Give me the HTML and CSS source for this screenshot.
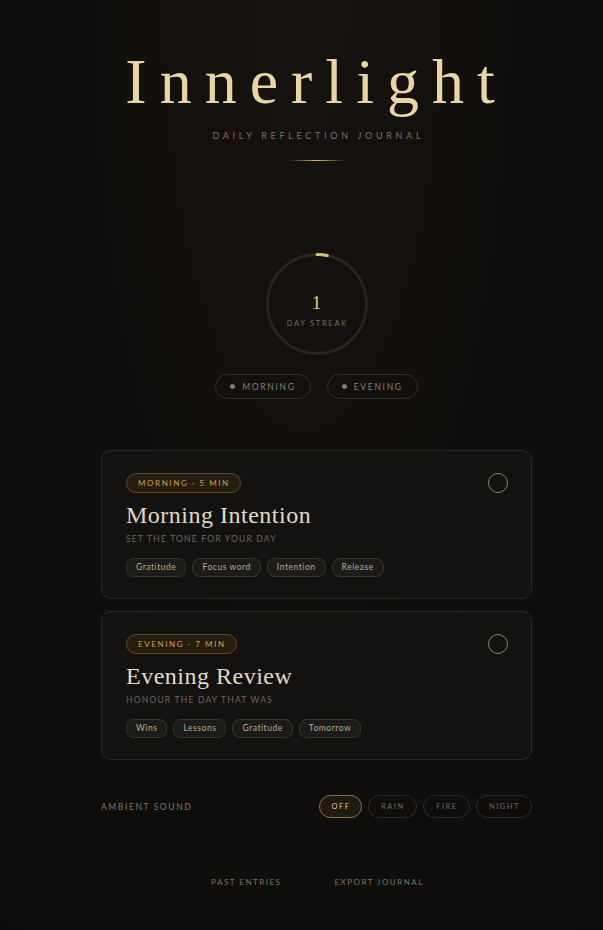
FILE: index.html
```html
<!DOCTYPE html>
<html lang="en">
<head>
    <meta charset="UTF-8">
    <meta name="viewport" content="width=device-width, initial-scale=1.0">
    <title>Innerlight</title>
    <link rel="stylesheet" href="styles.css">
</head>
<body>
    <div class="page">
        <header class="masthead">
            <h1 class="brand">Innerlight</h1>
            <p class="tagline">Daily Reflection Journal</p>
            <div class="rule"></div>
        </header>

        <section class="streak">
            <div class="ring">
                <svg width="102" height="102" viewBox="0 0 102 102">
                    <circle cx="51" cy="51" r="49.5" fill="none" stroke="#2a251d" stroke-width="3"/>
                    <circle cx="51" cy="51" r="49.5" fill="none" stroke="#d9bf7f" stroke-width="3"
                        stroke-dasharray="10.4 400" stroke-linecap="round" transform="rotate(-90 51 51)"/>
                </svg>
                <div class="ring-text">
                    <span class="streak-num">1</span>
                    <span class="streak-label">Day Streak</span>
                </div>
            </div>
            <div class="modes">
                <span class="mode"><i class="dot"></i>Morning</span>
                <span class="mode"><i class="dot"></i>Evening</span>
            </div>
        </section>

        <main class="rituals">
            <article class="card">
                <div class="card-head">
                    <span class="badge">Morning · 5 min</span>
                    <span class="check"></span>
                </div>
                <h2 class="card-title">Morning Intention</h2>
                <p class="card-sub">Set the tone for your day</p>
                <div class="tags">
                    <span class="tag">Gratitude</span>
                    <span class="tag">Focus word</span>
                    <span class="tag">Intention</span>
                    <span class="tag">Release</span>
                </div>
            </article>

            <article class="card">
                <div class="card-head">
                    <span class="badge">Evening · 7 min</span>
                    <span class="check"></span>
                </div>
                <h2 class="card-title">Evening Review</h2>
                <p class="card-sub">Honour the day that was</p>
                <div class="tags">
                    <span class="tag">Wins</span>
                    <span class="tag">Lessons</span>
                    <span class="tag">Gratitude</span>
                    <span class="tag">Tomorrow</span>
                </div>
            </article>
        </main>

        <section class="ambient">
            <span class="ambient-label">Ambient Sound</span>
            <div class="sounds">
                <button class="sound active">Off</button>
                <button class="sound">Rain</button>
                <button class="sound">Fire</button>
                <button class="sound">Night</button>
            </div>
        </section>

        <footer class="links">
            <a href="#">Past Entries</a>
            <a href="#">Export Journal</a>
        </footer>
    </div>
</body>
</html>
```

FILE: styles.css
```css
html, body {
    margin: 0;
    padding: 0;
}
body {
    min-height: 930px;
    background: radial-gradient(ellipse at 50% 0%, #16120f 0%, #100e0c 55%, #0e0c0a 100%);
    color: #d8cfbf;
    font-family: Lato, "Noto Sans", sans-serif;
    padding-left: 30px;
}
.page {
    width: 431px;
    margin: 0 auto;
    padding-top: 50px;
}
.masthead {
    display: flex;
    flex-direction: column;
    align-items: center;
}
.brand {
    margin: 0;
    font-family: "Liberation Serif", serif;
    font-weight: normal;
    font-size: 64px;
    line-height: 64px;
    letter-spacing: 13px;
    color: #e9d5a4;
}
.tagline {
    margin: 15px 0 0;
    font-size: 9px;
    line-height: 14px;
    letter-spacing: 3.7px;
    padding-left: 3.7px;
    text-transform: uppercase;
    color: #7c7262;
}
.rule {
    margin-top: 17px;
    width: 56px;
    height: 1px;
    background: linear-gradient(90deg, rgba(217,191,127,0), #d9bf7f 50%, rgba(217,191,127,0));
}
.streak {
    display: flex;
    flex-direction: column;
    align-items: center;
    margin-top: 92px;
}
.ring {
    position: relative;
    width: 102px;
    height: 102px;
}
.ring svg {
    display: block;
}
.ring-text {
    position: absolute;
    inset: 0;
    display: flex;
    flex-direction: column;
    align-items: center;
    justify-content: center;
    padding-top: 12px;
}
.streak-num {
    font-family: "Liberation Serif", serif;
    font-size: 19px;
    line-height: 20px;
    color: #e2c98c;
}
.streak-label {
    margin-top: 6px;
    font-size: 7.5px;
    letter-spacing: 1.7px;
    padding-left: 1.7px;
    text-transform: uppercase;
    color: #776d5d;
}
.modes {
    display: flex;
    gap: 16px;
    margin-top: 19px;
}
.mode {
    display: flex;
    align-items: center;
    height: 23px;
    padding: 0 14px 0 14px;
    border: 1px solid #332e26;
    border-radius: 13px;
    font-size: 8.5px;
    letter-spacing: 1.7px;
    text-transform: uppercase;
    color: #8a7f6c;
}
.dot {
    width: 5px;
    height: 5px;
    border-radius: 50%;
    background: #857a68;
    margin-right: 7px;
}
.rituals {
    margin-top: 51px;
    display: flex;
    flex-direction: column;
    gap: 12px;
}
.card {
    background: #141210;
    border: 1px solid #2c2821;
    border-radius: 10px;
    padding: 22px 23px 21px 24px;
}
.card-head {
    display: flex;
    justify-content: space-between;
    align-items: center;
}
.badge {
    height: 18px;
    line-height: 18px;
    padding: 0 10px 0 11px;
    border: 1px solid #5e4b22;
    border-radius: 10px;
    background: #251e10;
    font-size: 8px;
    letter-spacing: 1.6px;
    text-transform: uppercase;
    color: #c9a24c;
}
.check {
    width: 18px;
    height: 18px;
    border: 1.5px solid #8a8170;
    border-radius: 50%;
}
.card-title {
    margin: 8px 0 0;
    font-family: "Liberation Serif", serif;
    font-weight: normal;
    font-size: 24px;
    line-height: 29px;
    letter-spacing: 0.5px;
    color: #e0d8c7;
}
.card-sub {
    margin: 3px 0 0;
    font-size: 8.5px;
    line-height: 13px;
    letter-spacing: 1.2px;
    text-transform: uppercase;
    color: #6d6558;
}
.tags {
    display: flex;
    gap: 6px;
    margin-top: 12px;
}
.tag {
    height: 17px;
    line-height: 17px;
    padding: 0 9px;
    border: 1px solid #38342c;
    border-radius: 8px;
    background: #1d1b17;
    font-size: 8.5px;
    letter-spacing: 0.55px;
    color: #b3ab9b;
}
.ambient {
    margin-top: 35px;
    display: flex;
    justify-content: space-between;
    align-items: center;
}
.ambient-label {
    font-size: 8.5px;
    letter-spacing: 1.6px;
    text-transform: uppercase;
    color: #7f7564;
}
.sounds {
    display: flex;
    gap: 6px;
}
.sound {
    height: 23px;
    padding: 0 11px 0 12.5px;
    border: 1px solid #2e2a23;
    border-radius: 12px;
    background: transparent;
    font-family: Lato, "Noto Sans", sans-serif;
    font-size: 7.5px;
    letter-spacing: 1.5px;
    text-transform: uppercase;
    color: #6f6756;
    cursor: pointer;
}
.sound.active {
    border-color: #8c7446;
    background: #1f1a12;
    color: #dccaa0;
    padding: 0 10px 0 11.5px;
}
.links {
    margin-top: 59px;
    display: flex;
    justify-content: center;
    gap: 53px;
    padding-left: 2px;
}
.links a {
    font-size: 8px;
    letter-spacing: 1.5px;
    text-transform: uppercase;
    color: #7b7160;
    text-decoration: none;
}
```
